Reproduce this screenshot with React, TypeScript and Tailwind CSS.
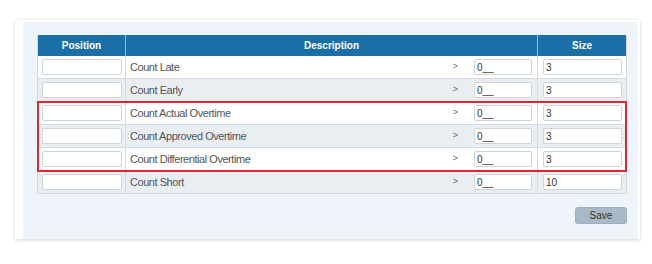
import React from 'react';

const rows = [
  { label: 'Count Late', size: '3' },
  { label: 'Count Early', size: '3' },
  { label: 'Count Actual Overtime', size: '3' },
  { label: 'Count Approved Overtime', size: '3' },
  { label: 'Count Differential Overtime', size: '3' },
  { label: 'Count Short', size: '10' },
];

function Row({ label, size, alt }: { label: string; size: string; alt: boolean }) {
  return (
    <div className={`flex h-[23px] border-b border-[#d3dae1] ${alt ? 'bg-[#e9eef3]' : 'bg-white'}`}>
      <div className="w-[88px] flex items-center pl-[4px] border-r border-[#d3dae1]">
        <input className="w-[80px] h-[16px] bg-white border border-[#cfd4d9] rounded-[2px] outline-none" />
      </div>
      <div className="flex-1 flex items-center pl-[4px] pr-[5px] border-r border-[#d3dae1]">
        <span className="flex-1 text-[11px] tracking-[-0.45px] text-[#555]">{label}</span>
        <span className="text-[9px] text-[#666] mr-[16px]">&gt;</span>
        <input
          defaultValue="0__"
          className="w-[58px] h-[16px] bg-white border border-[#cfd4d9] rounded-[2px] px-[2px] text-[10px] text-[#333] outline-none"
        />
      </div>
      <div className="w-[88px] flex items-center pl-[5px]">
        <input
          defaultValue={size}
          className="w-[79px] h-[16px] bg-white border border-[#cfd4d9] rounded-[2px] px-[2px] text-[10px] text-[#333] outline-none"
        />
      </div>
    </div>
  );
}

export default function App() {
  return (
    <div className="w-[652px] h-[264px] bg-white pt-[20px] pl-[15px]" style={{ fontFamily: '"Liberation Sans", Arial, sans-serif' }}>
      <div className="w-[625px] h-[219px] bg-[#eff4fb] border-l-[8px] border-t-[2px] border-r-[2px] border-white shadow-[0_1px_4px_rgba(0,0,0,0.18)] pl-[14px] pr-[11px] pt-[13px]">
        <div className="border-l border-[#d3dae1] border-r">
          <div className="flex h-[21px] bg-[#1a6fa7] text-white text-[10px] font-bold">
            <div className="w-[88px] flex items-center justify-center border-r border-[#9fbdd2]">Position</div>
            <div className="flex-1 flex items-center justify-center border-r border-[#9fbdd2]">Description</div>
            <div className="w-[88px] flex items-center justify-center">Size</div>
          </div>
          {rows.slice(0, 2).map((r, i) => (
            <Row key={r.label} label={r.label} size={r.size} alt={i % 2 === 1} />
          ))}
          <div className="relative outline outline-2 outline-[#e2262f] -outline-offset-1 z-10">
            {rows.slice(2, 5).map((r, i) => (
              <Row key={r.label} label={r.label} size={r.size} alt={i % 2 === 1} />
            ))}
          </div>
          <Row label={rows[5].label} size={rows[5].size} alt />
        </div>
        <div className="flex justify-end mt-[13px]">
          <button className="w-[52px] h-[17px] bg-[#a9bac6] border border-[#9eb0bd] rounded-[3px] text-[10px] text-[#333]">
            Save
          </button>
        </div>
      </div>
    </div>
  );
}
